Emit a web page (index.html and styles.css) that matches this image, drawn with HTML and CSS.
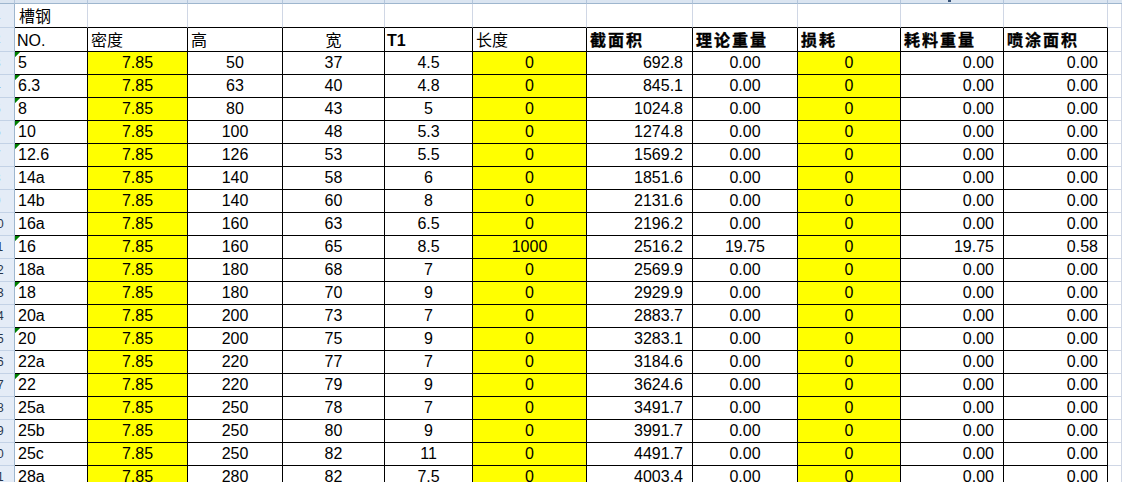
FILE: index.html
```html
<!DOCTYPE html>
<html lang="zh">
<head>
<meta charset="utf-8">
<title>槽钢</title>
<link rel="stylesheet" href="styles.css">
</head>
<body>
<div class="sheet">
  <!-- column header band -->
  <div class="ch"></div><div class="ch"></div><div class="ch"></div><div class="ch"></div><div class="ch"></div><div class="ch"></div><div class="ch"></div><div class="ch"></div><div class="ch"></div><div class="ch"></div><div class="ch"><span class="letter"></span></div><div class="ch"></div><div class="ch last"></div>

  <!-- row 1 -->
  <div class="rh"><span>1</span></div>
  <div class="g tb cjk l">槽钢</div><div class="g tb"></div><div class="g tb"></div><div class="g tb"></div><div class="g tb"></div><div class="g tb"></div><div class="g tb"></div><div class="g tb"></div><div class="g tb"></div><div class="g tb"></div><div class="g tb"></div><div class="g"></div>

  <!-- row 2 header -->
  <div class="rh hdr"><span>2</span></div>
  <div class="c h lat l">NO.</div>
  <div class="c h cjk l">密度</div>
  <div class="c h cjk l">高</div>
  <div class="c h cjk m">宽</div>
  <div class="c h lat b l">T1</div>
  <div class="c h cjk l">长度</div>
  <div class="c h cjk b l">截面积</div>
  <div class="c h cjk b l">理论重量</div>
  <div class="c h cjk b l">损耗</div>
  <div class="c h cjk b l">耗料重量</div>
  <div class="c h cjk b l">喷涂面积</div>
  <div class="g"></div>

  <div class="rh"><span>3</span></div>
  <div class="c l tri">5</div><div class="c m y">7.85</div><div class="c m">50</div><div class="c m">37</div><div class="c m">4.5</div><div class="c m y">0</div><div class="c r">692.8</div><div class="c m">0.00</div><div class="c m y">0</div><div class="c r">0.00</div><div class="c r">0.00</div><div class="g"></div>

  <div class="rh"><span>4</span></div>
  <div class="c l tri">6.3</div><div class="c m y">7.85</div><div class="c m">63</div><div class="c m">40</div><div class="c m">4.8</div><div class="c m y">0</div><div class="c r">845.1</div><div class="c m">0.00</div><div class="c m y">0</div><div class="c r">0.00</div><div class="c r">0.00</div><div class="g"></div>

  <div class="rh"><span>5</span></div>
  <div class="c l tri">8</div><div class="c m y">7.85</div><div class="c m">80</div><div class="c m">43</div><div class="c m">5</div><div class="c m y">0</div><div class="c r">1024.8</div><div class="c m">0.00</div><div class="c m y">0</div><div class="c r">0.00</div><div class="c r">0.00</div><div class="g"></div>

  <div class="rh"><span>6</span></div>
  <div class="c l tri">10</div><div class="c m y">7.85</div><div class="c m">100</div><div class="c m">48</div><div class="c m">5.3</div><div class="c m y">0</div><div class="c r">1274.8</div><div class="c m">0.00</div><div class="c m y">0</div><div class="c r">0.00</div><div class="c r">0.00</div><div class="g"></div>

  <div class="rh"><span>7</span></div>
  <div class="c l tri">12.6</div><div class="c m y">7.85</div><div class="c m">126</div><div class="c m">53</div><div class="c m">5.5</div><div class="c m y">0</div><div class="c r">1569.2</div><div class="c m">0.00</div><div class="c m y">0</div><div class="c r">0.00</div><div class="c r">0.00</div><div class="g"></div>

  <div class="rh"><span>8</span></div>
  <div class="c l">14a</div><div class="c m y">7.85</div><div class="c m">140</div><div class="c m">58</div><div class="c m">6</div><div class="c m y">0</div><div class="c r">1851.6</div><div class="c m">0.00</div><div class="c m y">0</div><div class="c r">0.00</div><div class="c r">0.00</div><div class="g"></div>

  <div class="rh"><span>9</span></div>
  <div class="c l">14b</div><div class="c m y">7.85</div><div class="c m">140</div><div class="c m">60</div><div class="c m">8</div><div class="c m y">0</div><div class="c r">2131.6</div><div class="c m">0.00</div><div class="c m y">0</div><div class="c r">0.00</div><div class="c r">0.00</div><div class="g"></div>

  <div class="rh"><span>10</span></div>
  <div class="c l">16a</div><div class="c m y">7.85</div><div class="c m">160</div><div class="c m">63</div><div class="c m">6.5</div><div class="c m y">0</div><div class="c r">2196.2</div><div class="c m">0.00</div><div class="c m y">0</div><div class="c r">0.00</div><div class="c r">0.00</div><div class="g"></div>

  <div class="rh"><span>11</span></div>
  <div class="c l tri">16</div><div class="c m y">7.85</div><div class="c m">160</div><div class="c m">65</div><div class="c m">8.5</div><div class="c m y">1000</div><div class="c r">2516.2</div><div class="c m">19.75</div><div class="c m y">0</div><div class="c r">19.75</div><div class="c r">0.58</div><div class="g"></div>

  <div class="rh"><span>12</span></div>
  <div class="c l">18a</div><div class="c m y">7.85</div><div class="c m">180</div><div class="c m">68</div><div class="c m">7</div><div class="c m y">0</div><div class="c r">2569.9</div><div class="c m">0.00</div><div class="c m y">0</div><div class="c r">0.00</div><div class="c r">0.00</div><div class="g"></div>

  <div class="rh"><span>13</span></div>
  <div class="c l tri">18</div><div class="c m y">7.85</div><div class="c m">180</div><div class="c m">70</div><div class="c m">9</div><div class="c m y">0</div><div class="c r">2929.9</div><div class="c m">0.00</div><div class="c m y">0</div><div class="c r">0.00</div><div class="c r">0.00</div><div class="g"></div>

  <div class="rh"><span>14</span></div>
  <div class="c l">20a</div><div class="c m y">7.85</div><div class="c m">200</div><div class="c m">73</div><div class="c m">7</div><div class="c m y">0</div><div class="c r">2883.7</div><div class="c m">0.00</div><div class="c m y">0</div><div class="c r">0.00</div><div class="c r">0.00</div><div class="g"></div>

  <div class="rh"><span>15</span></div>
  <div class="c l tri">20</div><div class="c m y">7.85</div><div class="c m">200</div><div class="c m">75</div><div class="c m">9</div><div class="c m y">0</div><div class="c r">3283.1</div><div class="c m">0.00</div><div class="c m y">0</div><div class="c r">0.00</div><div class="c r">0.00</div><div class="g"></div>

  <div class="rh"><span>16</span></div>
  <div class="c l">22a</div><div class="c m y">7.85</div><div class="c m">220</div><div class="c m">77</div><div class="c m">7</div><div class="c m y">0</div><div class="c r">3184.6</div><div class="c m">0.00</div><div class="c m y">0</div><div class="c r">0.00</div><div class="c r">0.00</div><div class="g"></div>

  <div class="rh"><span>17</span></div>
  <div class="c l tri">22</div><div class="c m y">7.85</div><div class="c m">220</div><div class="c m">79</div><div class="c m">9</div><div class="c m y">0</div><div class="c r">3624.6</div><div class="c m">0.00</div><div class="c m y">0</div><div class="c r">0.00</div><div class="c r">0.00</div><div class="g"></div>

  <div class="rh"><span>18</span></div>
  <div class="c l">25a</div><div class="c m y">7.85</div><div class="c m">250</div><div class="c m">78</div><div class="c m">7</div><div class="c m y">0</div><div class="c r">3491.7</div><div class="c m">0.00</div><div class="c m y">0</div><div class="c r">0.00</div><div class="c r">0.00</div><div class="g"></div>

  <div class="rh"><span>19</span></div>
  <div class="c l">25b</div><div class="c m y">7.85</div><div class="c m">250</div><div class="c m">80</div><div class="c m">9</div><div class="c m y">0</div><div class="c r">3991.7</div><div class="c m">0.00</div><div class="c m y">0</div><div class="c r">0.00</div><div class="c r">0.00</div><div class="g"></div>

  <div class="rh"><span>20</span></div>
  <div class="c l">25c</div><div class="c m y">7.85</div><div class="c m">250</div><div class="c m">82</div><div class="c m">11</div><div class="c m y">0</div><div class="c r">4491.7</div><div class="c m">0.00</div><div class="c m y">0</div><div class="c r">0.00</div><div class="c r">0.00</div><div class="g"></div>

  <div class="rh"><span>21</span></div>
  <div class="c l">28a</div><div class="c m y">7.85</div><div class="c m">280</div><div class="c m">82</div><div class="c m">7.5</div><div class="c m y">0</div><div class="c r">4003.4</div><div class="c m">0.00</div><div class="c m y">0</div><div class="c r">0.00</div><div class="c r">0.00</div><div class="g"></div>
</div>
</body>
</html>
```
FILE: styles.css
```css
html, body {
  margin: 0;
  padding: 0;
  background: #ffffff;
  overflow: hidden;
}

body {
  width: 1122px;
  height: 482px;
  font-family: "Liberation Sans", Arial, sans-serif;
  font-size: 16px;
  color: #000000;
}

.sheet {
  display: grid;
  grid-template-columns: 15px 73px 100px 95px 102px 88px 114px 106px 105px 103px 103px 104px 1fr;
  grid-template-rows: 4px 24px 24px;
  grid-auto-rows: 23px;
}

.sheet > div {
  box-sizing: border-box;
  white-space: nowrap;
  overflow: hidden;
  line-height: 22px;
}

/* column header band (mostly scrolled out of view) */
.ch {
  background: #dbe5f1;
  border-right: 1px solid #b4c6dc;
  border-bottom: 1px solid #9eb6ce;
  display: flex;
  justify-content: center;
}
.ch.last { border-right: 0; }
.letter {
  width: 3px;
  height: 2px;
  margin-left: -6px;
  background: #3a5478;
}

/* row header (partly scrolled out of view) */
.rh {
  background: #e4ecf7;
  border-right: 1px solid #9eb6ce;
  border-bottom: 1px solid #c3d2e6;
  display: flex;
  justify-content: flex-end;
  font-size: 12px;
  color: #27354a;
}
.rh span {
  flex: 0 0 40px;
  text-align: center;
  margin-right: -3px;
}

/* plain grid cells outside the bordered table */
.g {
  border-right: 1px solid #d0d7e5;
  border-bottom: 1px solid #d0d7e5;
}
.g.tb { border-bottom-color: #000000; }
.g.cjk { line-height: 23px; }

/* bordered table cells */
.c {
  border-right: 1px solid #000000;
  border-bottom: 1px solid #000000;
  color: #000000;
}

.l { text-align: left; padding-left: 3px; }
.m { text-align: center; }
.r { text-align: right; padding-right: 9px; }

.y { background: #ffff00; }

.h.cjk {
  font-family: "Noto Sans CJK SC", sans-serif;
  line-height: 23px;
  font-weight: 400;
}
.h.cjk.b {
  font-weight: 700;
  letter-spacing: 2px;
  -webkit-text-stroke: 0.35px #000000;
}
.g.cjk {
  font-family: "Noto Sans CJK SC", sans-serif;
  padding-left: 4px;
}
.h.lat {
  padding-top: 2px;
  line-height: 21px;
}
.h.l.lat { padding-left: 2px; }
.b { font-weight: 700; }

/* "number stored as text" indicator */
.tri {
  background: linear-gradient(135deg, #008000 3.5px, transparent 3.6px) no-repeat left top / 7px 7px;
}
```
